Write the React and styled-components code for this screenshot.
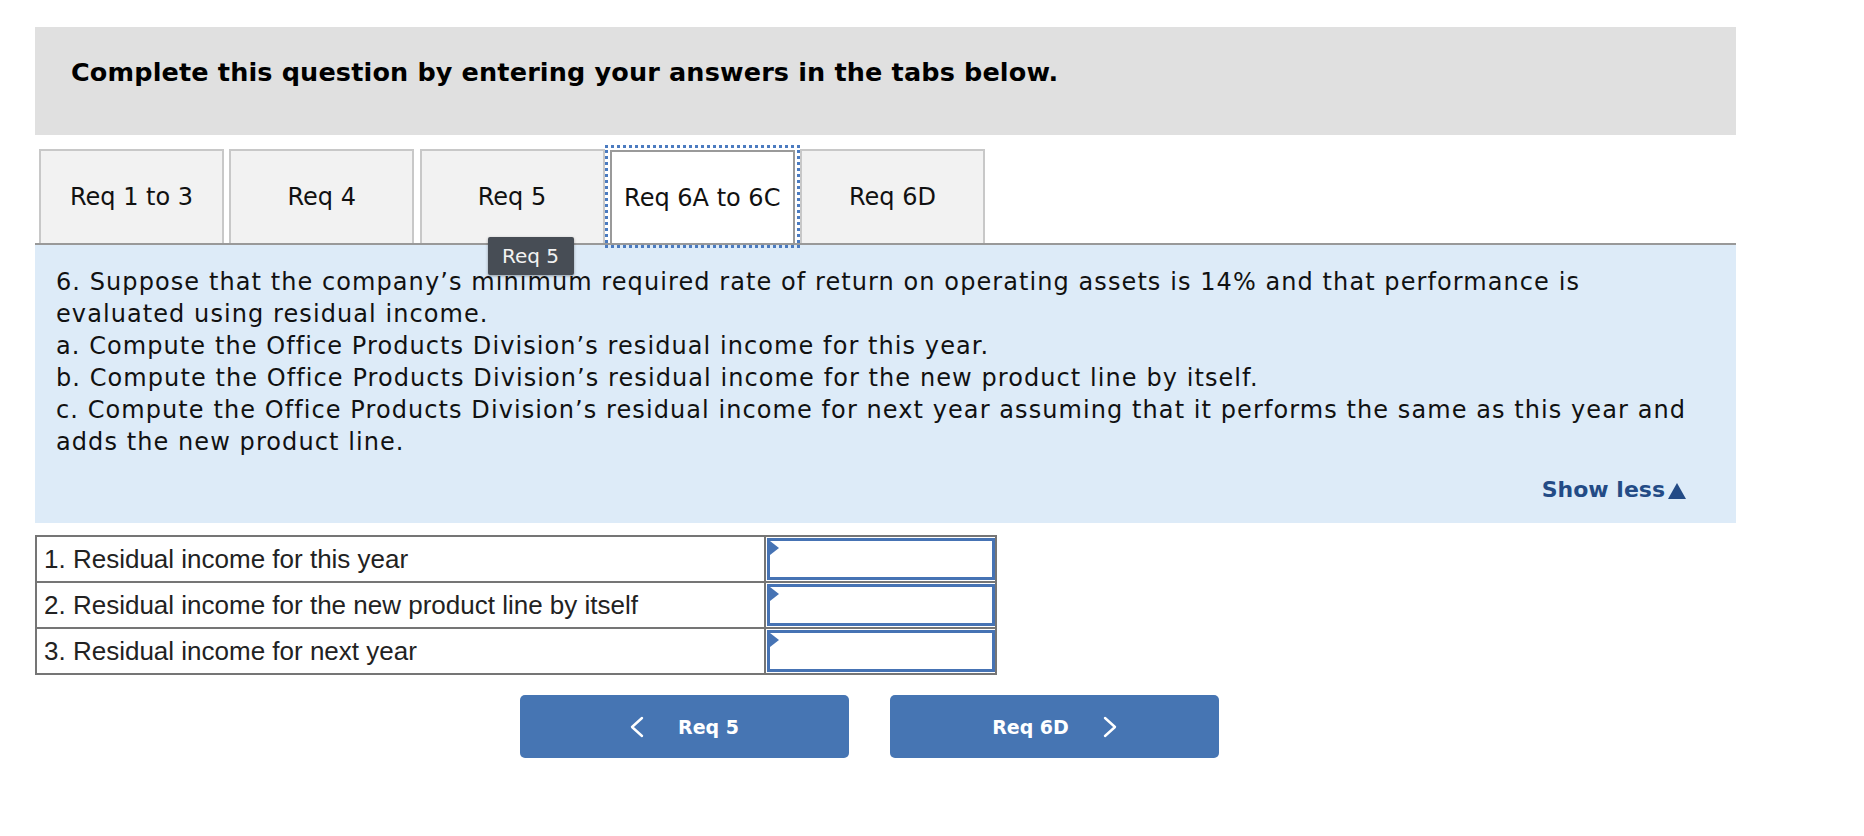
import React from "react";
import styled, { createGlobalStyle } from "styled-components";

const Global = createGlobalStyle`
  html, body { margin: 0; padding: 0; background: #ffffff; }
  body { font-family: "DejaVu Sans", Verdana, sans-serif; color: #111; }
  * { box-sizing: border-box; }
`;

const Page = styled.div`
  width: 1864px;
  height: 836px;
  padding: 27px 0 0 35px;
  overflow: hidden;
`;

const Column = styled.div`
  width: 1701px;
  display: flex;
  flex-direction: column;
`;

const Instruction = styled.div`
  height: 108px;
  background: #e0e0e0;
  padding: 30px 0 0 36px;
  font-family: "DejaVu Sans", Verdana, sans-serif;
  font-weight: 700;
  font-size: 25.5px;
  letter-spacing: 0.15px;
  line-height: 30px;
  color: #000;
`;

const TabRow = styled.div`
  margin-top: 14px;
  display: flex;
  gap: 5.25px;
  padding-left: 4px;
  border-bottom: 2px solid #999;
  position: relative;
  z-index: 2;
`;

const Tab = styled.div`
  position: relative;
  width: 185px;
  display: flex;
  align-items: center;
  justify-content: center;
  font-family: "DejaVu Sans", Verdana, sans-serif;
  font-size: 24px;
  color: #111;
  background: ${(p) => (p.$active ? "#ffffff" : "#f2f2f2")};
  border: 2px solid ${(p) => (p.$active ? "#9a9a9a" : "#c8c8c8")};
  border-bottom: none;
  margin-top: ${(p) => (p.$active ? "1px" : "0")};
  height: ${(p) => (p.$active ? "93px" : "94px")};
  outline: ${(p) => (p.$active ? "3px dotted #4b7bc0" : "none")};
  outline-offset: 2px;
`;

const Tooltip = styled.div`
  position: absolute;
  left: 66px;
  top: 86px;
  width: 86px;
  height: 38px;
  background: #474d55;
  border-radius: 2px;
  box-shadow: 0 1px 3px rgba(0, 0, 0, 0.35);
  color: #f2f2f2;
  font-family: "DejaVu Sans", Verdana, sans-serif;
  font-size: 20px;
  display: flex;
  align-items: center;
  justify-content: center;
  z-index: 5;
`;

const Panel = styled.div`
  background: #ddebf8;
  height: 278px;
  padding: 21px 50px 0 21px;
  display: flex;
  flex-direction: column;
`;

const Question = styled.div`
  width: 1640px;
  font-family: "DejaVu Sans", Verdana, sans-serif;
  font-size: 24px;
  letter-spacing: 1.08px;
  line-height: 32px;
  color: #111;
`;

const ShowLess = styled.div`
  margin-top: 17px;
  align-self: flex-end;
  font-family: "DejaVu Sans", Verdana, sans-serif;
  font-weight: 700;
  font-size: 22px;
  line-height: 30px;
  color: #234b86;
  display: flex;
  align-items: center;
  gap: 3px;
`;

const Triangle = styled.span`
  width: 0;
  height: 0;
  border-left: 9px solid transparent;
  border-right: 9px solid transparent;
  border-bottom: 16px solid #234b86;
  margin-top: 2px;
`;

const Table = styled.table`
  margin-top: 12px;
  width: 962px;
  border-collapse: collapse;
  border: 2px solid #757575;
`;

const Row = styled.tr`
  height: 46px;
`;

const Label = styled.td`
  width: 729px;
  border: 2px solid #757575;
  padding: 0 0 0 7px;
  font-family: "Liberation Sans", Arial, sans-serif;
  font-size: 26px;
  color: #222;
  vertical-align: middle;
`;

const InputCell = styled.td`
  border: 2px solid #757575;
  padding: 1px 0 1px 1px;
`;

const InputBox = styled.div`
  position: relative;
  height: 42px;
  border: 3px solid #4673b4;
  background: #fff;
`;

const Flag = styled.span`
  position: absolute;
  left: 0;
  top: 0;
  width: 0;
  height: 0;
  border-top: 7px solid transparent;
  border-bottom: 7px solid transparent;
  border-left: 9px solid #4673b4;
`;

const Nav = styled.div`
  margin-top: 20px;
  padding-left: 485px;
  display: flex;
  gap: 41px;
`;

const NavButton = styled.div`
  width: 329px;
  height: 63px;
  background: #4675b3;
  border-radius: 5px;
  display: flex;
  align-items: center;
  justify-content: center;
  gap: 34px;
  color: #fff;
  font-family: "DejaVu Sans", Verdana, sans-serif;
  font-weight: 700;
  font-size: 19px;
`;

const Chevron = ({ dir }) => (
  <svg width="14" height="22" viewBox="0 0 14 22" fill="none">
    <polyline
      points={dir === "left" ? "12,2 2,11 12,20" : "2,2 12,11 2,20"}
      stroke="#ffffff"
      strokeWidth="2.4"
      strokeLinecap="round"
      strokeLinejoin="round"
    />
  </svg>
);

const tabs = ["Req 1 to 3", "Req 4", "Req 5", "Req 6A to 6C", "Req 6D"];
const rows = [
  "1. Residual income for this year",
  "2. Residual income for the new product line by itself",
  "3. Residual income for next year",
];

export default function App() {
  return (
    <>
      <Global />
      <Page>
        <Column>
          <Instruction>Complete this question by entering your answers in the tabs below.</Instruction>
          <TabRow>
            {tabs.map((t, i) => (
              <Tab key={t} $active={i === 3}>
                {t}
                {i === 2 && <Tooltip>Req 5</Tooltip>}
              </Tab>
            ))}
          </TabRow>
          <Panel>
            <Question>
              6. Suppose that the company’s minimum required rate of return on operating assets is 14% and that performance is evaluated using residual income.
              <br />
              a. Compute the Office Products Division’s residual income for this year.
              <br />
              b. Compute the Office Products Division’s residual income for the new product line by itself.
              <br />
              c. Compute the Office Products Division’s residual income for next year assuming that it performs the same as this year and adds the new product line.
            </Question>
            <ShowLess>
              Show less
              <Triangle />
            </ShowLess>
          </Panel>
          <Table>
            <tbody>
              {rows.map((r) => (
                <Row key={r}>
                  <Label>{r}</Label>
                  <InputCell>
                    <InputBox>
                      <Flag />
                    </InputBox>
                  </InputCell>
                </Row>
              ))}
            </tbody>
          </Table>
          <Nav>
            <NavButton>
              <Chevron dir="left" />
              <span>Req 5</span>
            </NavButton>
            <NavButton>
              <span>Req 6D</span>
              <Chevron dir="right" />
            </NavButton>
          </Nav>
        </Column>
      </Page>
    </>
  );
}
